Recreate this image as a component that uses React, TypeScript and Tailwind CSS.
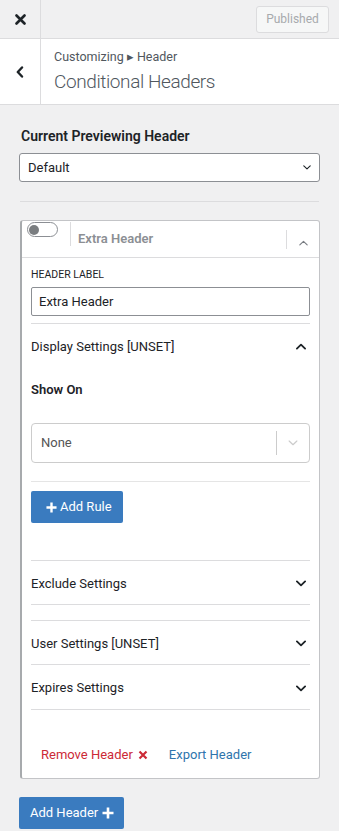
import React from "react";

const font = { fontFamily: "Roboto, 'Noto Sans', 'Liberation Sans', sans-serif" };

function ChevronDown({ className = "", color = "#1d2327", w = 11, h = 7, sw = 2 }: { className?: string; color?: string; w?: number; h?: number; sw?: number }) {
  return (
    <svg className={className} width={w} height={h} viewBox="0 0 11 7" fill="none">
      <path d="M1 1.2 L5.5 5.5 L10 1.2" stroke={color} strokeWidth={sw} strokeLinecap="round" strokeLinejoin="round" />
    </svg>
  );
}

function ChevronUp({ className = "", color = "#1d2327", w = 11, h = 7, sw = 2 }: { className?: string; color?: string; w?: number; h?: number; sw?: number }) {
  return (
    <svg className={className} width={w} height={h} viewBox="0 0 11 7" fill="none">
      <path d="M1 5.8 L5.5 1.5 L10 5.8" stroke={color} strokeWidth={sw} strokeLinecap="round" strokeLinejoin="round" />
    </svg>
  );
}

function Plus({ size = 12 }: { size?: number }) {
  return (
    <svg width={size} height={size} viewBox="0 0 12 12" fill="none">
      <path d="M6 0.5 V11.5 M0.5 6 H11.5" stroke="white" strokeWidth={2.6} />
    </svg>
  );
}

function AccRow({ label, open = false, h = "h-[43px]" }: { label: string; open?: boolean; h?: string }) {
  return (
    <div className={`flex items-center justify-between ${h} pt-[2px] pr-[4px]`}>
      <span className="text-[13px] text-[#1d2327]">{label}</span>
      {open ? <ChevronUp w={10} h={7} /> : <ChevronDown w={10} h={7} />}
    </div>
  );
}

export default function App() {
  return (
    <div className="w-[339px] h-[831px] bg-[#f0f0f1] overflow-hidden text-[#1d2327]" style={font}>
      {/* top bar */}
      <div className="flex h-[39px] border-b border-[#dcdcde]">
        <div className="w-[41px] border-r border-[#dcdcde] flex items-center justify-center">
          <svg width="11" height="11" viewBox="0 0 11 11">
            <path d="M1.5 1.5 L9.5 9.5 M9.5 1.5 L1.5 9.5" stroke="#1d2327" strokeWidth="2.6" strokeLinecap="round" />
          </svg>
        </div>
        <div className="flex-1 flex items-center justify-end pr-[10px]">
          <div className="h-[27px] w-[73px] border border-[#dcdcde] bg-[#f6f7f7] rounded-[3px] flex items-center justify-center text-[12px] text-[#a7aaad]">
            Published
          </div>
        </div>
      </div>
      {/* title */}
      <div className="flex h-[66px] bg-white border-b border-[#dcdcde]">
        <div className="w-[41px] border-r border-[#dcdcde] flex items-center justify-center">
          <svg width="8" height="12" viewBox="0 0 8 12">
            <path d="M6 1.5 L1.8 6 L6 10.5" stroke="#1d2327" strokeWidth="2.4" fill="none" strokeLinecap="round" strokeLinejoin="round" />
          </svg>
        </div>
        <div className="flex flex-col justify-center pl-[13px]">
          <div className="text-[12.5px] text-[#50575e] leading-[16px]">Customizing ▸ Header</div>
          <div className="text-[19px] tracking-[-0.4px] font-light text-[#50575e] leading-[26px] mt-[4px]">Conditional Headers</div>
        </div>
      </div>
      {/* body */}
      <div className="px-[19px] pt-[21px]">
        <div className="pl-[2px] text-[14px] font-semibold text-[#1d2327] leading-[20px] mb-[7px]">Current Previewing Header</div>
        <div className="h-[29px] bg-white border border-[#8c8f94] rounded-[3px] flex items-center justify-between pl-[8px] pr-[8px]">
          <span className="text-[13px] text-[#1d2327]">Default</span>
          <ChevronDown w={8} h={5} sw={1.6} />
        </div>
        <div className="mt-[19px] mx-[1px] border-t border-[#dcdcde]" />
        {/* card */}
        <div className="mt-[18px] ml-[1px] bg-white border border-[#c3c4c7] border-l-2 border-l-[#a7aaad] rounded-[3px]">
          <div className="h-[37px] flex border-b border-[#dcdcde]">
            <div className="w-[48px] flex items-start pl-[5px] pt-[1px]">
              <div className="w-[31px] h-[15px] border border-[#8c8f94] rounded-full flex items-center pl-[1px]">
                <div className="w-[10px] h-[10px] rounded-full bg-[#7a7d80]" />
              </div>
            </div>
            <div className="w-px bg-[#dcdcde] mt-[1px] h-[24px]" />
            <div className="flex-1 flex items-end pb-[9px] pl-[7px]">
              <span className="text-[13px] font-semibold text-[#8c8f94]">Extra Header</span>
            </div>
            <div className="w-px bg-[#dcdcde] mt-[9px] h-[19px]" />
            <div className="w-[32px] flex items-center justify-center pt-[7px]">
              <ChevronUp w={9} h={6} sw={1.4} color="#787c82" />
            </div>
          </div>
          <div className="pl-[9px] pr-[9px]">
            <div className="pt-[10px] text-[10.5px] text-[#1d2327] uppercase leading-[14px]">Header Label</div>
            <div className="mt-[5px] h-[29px] border border-[#8c8f94] rounded-[2px] flex items-center pl-[7px] text-[13px] text-[#1d2327]">
              Extra Header
            </div>
            <div className="mt-[7px] border-t border-[#dcdcde]" />
            <AccRow label="Display Settings [UNSET]" open />
            <div className="pt-[13px] text-[13px] font-semibold leading-[20px]">Show On</div>
            <div className="mt-[23px] h-[40px] border border-[#cccccc] rounded-[4px] flex items-center">
              <span className="flex-1 pl-[9px] text-[13px] text-[#555]">None</span>
              <div className="w-px h-[24px] bg-[#cccccc]" />
              <div className="w-[32px] flex items-center justify-center">
                <ChevronDown w={10} h={6} sw={1.4} color="#cccccc" />
              </div>
            </div>
            <div className="mt-[18px] border-t border-[#e5e5e5]" />
            <div className="mt-[9px]">
              <div className="inline-flex items-center gap-[3px] h-[32px] pl-[15px] pr-[11px] bg-[#3a7bbf] rounded-[2px] text-white text-[13px]">
                <Plus size={11} />
                <span>Add Rule</span>
              </div>
            </div>
            <div className="mt-[37px] border-t border-[#dcdcde]" />
            <AccRow label="Exclude Settings" />
            <div className="border-t border-[#dcdcde]" />
            <div className="border-t border-[#dcdcde] mt-[15px]" />
            <AccRow label="User Settings [UNSET]" />
            <div className="border-t border-[#dcdcde]" />
            <AccRow label="Expires Settings" h="h-[44px]" />
            <div className="border-t border-[#dcdcde]" />
            <div className="flex items-center h-[68px] pt-[21px] pl-[10px] gap-[21px] text-[13px]">
              <span className="flex items-center gap-[5px] text-[#cc2a36]">
                Remove Header
                <svg width="10" height="10" viewBox="0 0 10 10">
                  <path d="M1.5 1.5 L8.5 8.5 M8.5 1.5 L1.5 8.5" stroke="#cc2a36" strokeWidth="2.2" />
                </svg>
              </span>
              <span className="text-[#2f75ad]">Export Header</span>
            </div>
          </div>
        </div>
        <div className="mt-[18px]">
          <div className="inline-flex items-center gap-[4px] h-[32px] pl-[11px] pr-[10px] bg-[#3a7bbf] rounded-[2px] text-white text-[13px]">
            <span>Add Header</span>
            <Plus size={12} />
          </div>
        </div>
      </div>
    </div>
  );
}
